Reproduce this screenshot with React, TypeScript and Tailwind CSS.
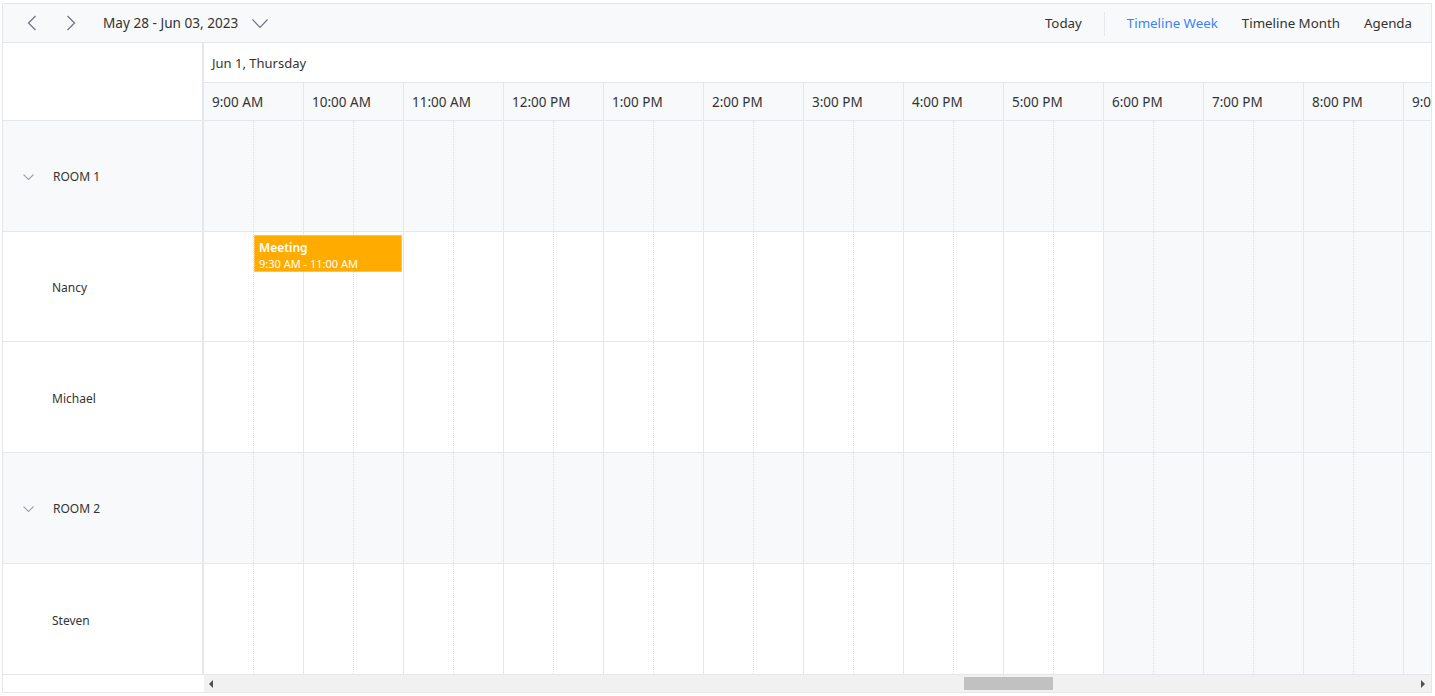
import React from 'react';

const hours = [
  '9:00 AM', '10:00 AM', '11:00 AM', '12:00 PM', '1:00 PM', '2:00 PM', '3:00 PM',
  '4:00 PM', '5:00 PM', '6:00 PM', '7:00 PM', '8:00 PM', '9:00 PM',
];

type Row = { kind: 'room' | 'res'; label: string; h: string };

const rows: Row[] = [
  { kind: 'room', label: 'ROOM 1', h: 'h-[111px]' },
  { kind: 'res', label: 'Nancy', h: 'h-[110px]' },
  { kind: 'res', label: 'Michael', h: 'h-[111px]' },
  { kind: 'room', label: 'ROOM 2', h: 'h-[111px]' },
  { kind: 'res', label: 'Steven', h: 'h-[111px]' },
];

const ChevronLeft = () => (
  <svg width="10" height="16" viewBox="0 0 10 16" fill="none" stroke="#6b7280" strokeWidth="1.2">
    <polyline points="8.5,1 1.5,8 8.5,15" />
  </svg>
);

const ChevronRight = () => (
  <svg width="10" height="16" viewBox="0 0 10 16" fill="none" stroke="#6b7280" strokeWidth="1.2">
    <polyline points="1.5,1 8.5,8 1.5,15" />
  </svg>
);

const ChevronDown = ({ w, h, color }: { w: number; h: number; color: string }) => (
  <svg width={w} height={h} viewBox={`0 0 ${w} ${h}`} fill="none" stroke={color} strokeWidth="1.1">
    <polyline points={`0.5,0.5 ${w / 2},${h - 0.5} ${w - 0.5},0.5`} />
  </svg>
);

const App: React.FC = () => {
  return (
    <div className="h-[696px] bg-white pl-[2px] pt-[3px] font-['Segoe_UI','Noto_Sans',sans-serif] text-[#333]">
      <div className="w-[1430px] h-[690px] border border-[#e5e7eb] flex flex-col overflow-hidden">
        {/* toolbar */}
        <div className="h-[39px] shrink-0 bg-[#f8f9fa] border-b border-[#e5e7eb] flex items-center">
          <div className="ml-[24px] flex items-center">
            <ChevronLeft />
          </div>
          <div className="ml-[29px] flex items-center">
            <ChevronRight />
          </div>
          <span className="ml-[27px] text-[13.6px] text-[#333]">May 28 - Jun 03, 2023</span>
          <div className="ml-[14px] flex items-center">
            <ChevronDown w={16} h={9} color="#6b7280" />
          </div>
          <div className="ml-auto mr-[19px] flex items-center text-[13.3px] pt-[2px]">
            <span>Today</span>
            <div className="w-px h-[24px] bg-[#e5e7eb] ml-[22px]"></div>
            <span className="ml-[22px] text-[#3b82f6]">Timeline Week</span>
            <span className="ml-[24px]">Timeline Month</span>
            <span className="ml-[24px]">Agenda</span>
          </div>
        </div>

        <div className="flex flex-1 min-h-0">
          {/* resource column */}
          <div className="w-[201px] shrink-0 flex flex-col">
            <div className="h-[78px] border-b border-r-2 border-[#e5e7eb] bg-white"></div>
            {rows.map((r) => (
              <div
                key={r.label}
                className={`${r.h} shrink-0 border-b border-r-2 border-[#e5e7eb] flex items-center ${
                  r.kind === 'room' ? 'bg-[#f8f9fa] pt-[1px]' : 'bg-white pt-[3px]'
                }`}
              >
                {r.kind === 'room' ? (
                  <>
                    <div className="ml-[20px] flex items-center">
                      <ChevronDown w={11} h={6} color="#9ca3af" />
                    </div>
                    <span className="ml-[19px] text-[12px]">{r.label}</span>
                  </>
                ) : (
                  <span className="ml-[49px] text-[12px]">{r.label}</span>
                )}
              </div>
            ))}
            <div className="flex-1 bg-white"></div>
          </div>

          {/* timeline */}
          <div className="flex-1 min-w-0 flex flex-col overflow-hidden">
            <div className="h-[40px] shrink-0 border-b border-[#e5e7eb] bg-white flex items-center pl-[8px] pt-[3px] text-[13px]">
              Jun 1, Thursday
            </div>
            <div className="h-[38px] shrink-0 border-b border-[#e5e7eb] bg-[#f8f9fa] flex">
              {hours.map((h) => (
                <div
                  key={h}
                  className="w-[100px] shrink-0 border-r border-[#e5e7eb] flex items-center pl-[8px] pt-[2px] text-[13.5px] whitespace-nowrap overflow-hidden"
                >
                  {h}
                </div>
              ))}
            </div>
            {rows.map((r) => (
              <div key={r.label} className={`${r.h} shrink-0 border-b border-[#e5e7eb] flex relative`}>
                {hours.map((h, i) => {
                  const gray = r.kind === 'room' || i >= 9;
                  return (
                    <div key={h} className={`w-[100px] shrink-0 flex ${gray ? 'bg-[#f8f9fa]' : 'bg-white'}`}>
                      <div className="w-[50px] border-r border-dotted border-[#dcdfe4]"></div>
                      <div className="w-[50px] border-r border-[#e5e7eb]"></div>
                    </div>
                  );
                })}
                {r.label === 'Nancy' && (
                  <div className="absolute left-[50px] top-[3px] w-[148px] h-[37px] bg-[#ffab00] border border-[#ffc24d] text-white pl-[4px] pt-[6px] leading-none">
                    <div className="text-[12px] font-semibold">Meeting</div>
                    <div className="text-[11px] mt-[4px]">9:30 AM - 11:00 AM</div>
                  </div>
                )}
              </div>
            ))}
            <div className="h-[17px] shrink-0 bg-[#f1f1f1] flex items-center">
              <div className="ml-[5px] w-0 h-0 border-y-[4px] border-y-transparent border-r-[4px] border-r-[#505050]"></div>
              <div className="ml-[751px] w-[89px] h-[13px] bg-[#c1c1c1]"></div>
              <div className="ml-auto mr-[6px] w-0 h-0 border-y-[4px] border-y-transparent border-l-[4px] border-l-[#505050]"></div>
            </div>
          </div>
        </div>
      </div>
    </div>
  );
};

export default App;
